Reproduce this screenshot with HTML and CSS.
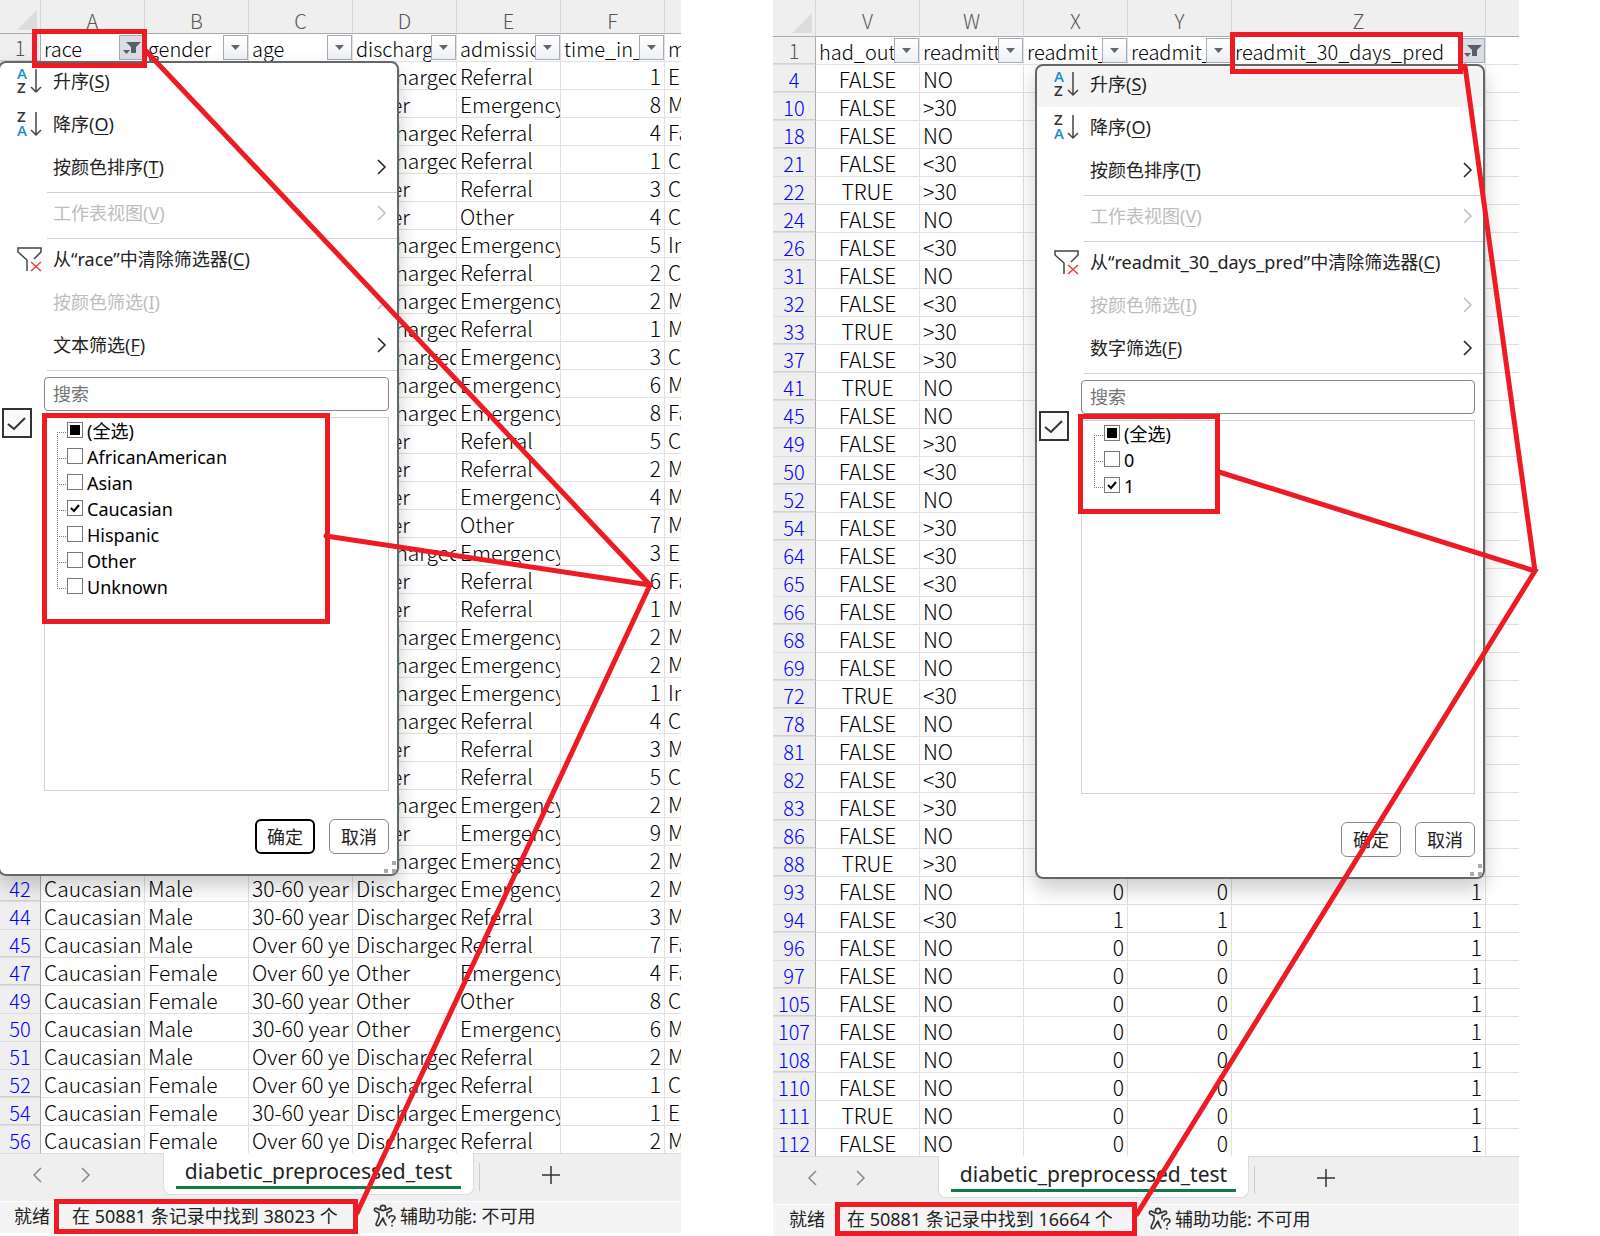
FILE: index.html
```html
<!DOCTYPE html>
<html lang="zh-CN">
<head>
<meta charset="utf-8">
<title>diabetic_preprocessed_test</title>
<link rel="stylesheet" href="styles.css">
</head>
<body>
<svg class="symbols" aria-hidden="true">
  <symbol id="sort-asc" viewBox="0 0 26 26">
    <text class="glyph-blue" x="0" y="11">A</text><text class="glyph-dark" x="0" y="25">Z</text>
    <path class="stroke" d="M19 1V24M14 19L19 24L24 19"/>
  </symbol>
  <symbol id="sort-desc" viewBox="0 0 26 26">
    <text class="glyph-dark" x="0" y="11">Z</text><text class="glyph-blue" x="0" y="25">A</text>
    <path class="stroke" d="M19 1V24M14 19L19 24L24 19"/>
  </symbol>
  <symbol id="clear" viewBox="0 0 26 26">
    <path class="stroke" d="M10 25V14L1 6V2H24V6L17 13"/>
    <path class="cross" d="M14 16L24 25M24 16L14 25"/>
  </symbol>
  <symbol id="chevron" viewBox="0 0 10 16"><path d="M1 1L8 8L1 15" fill="none" stroke="currentColor" stroke-width="1.500"/></symbol>
  <symbol id="drop" viewBox="0 0 23 23"><path d="M7 9H16L11.500 14Z" fill="#666"/></symbol>
  <symbol id="filtered" viewBox="0 0 23 23"><path d="M6 6H21L16 11V17H11V11Z" fill="#5b5e66"/><path d="M3 14H10L6.500 18Z" fill="#5b5e66"/></symbol>
  <symbol id="person" viewBox="0 0 24 24">
    <g fill="none" stroke="#333" stroke-width="1.600" stroke-linejoin="round" stroke-linecap="round">
      <circle cx="10" cy="4" r="2.600"/>
      <path d="M7 6L3 4C1 4 1 6 2 7L6 9V13L3 20C3 22 5 22 6 21L10 14L11 16M13 6L17 4C19 4 19 6 18 7L14 9V12M10 16L13 21"/>
      <path d="M16 14C16 11 22 11 22 14C22 16 19 16 19 18.500M19 21.500V22"/>
    </g>
  </symbol>
</svg>

<main class="stage">
  <section class="sheet sheet-left">
    <table class="grid">
      <colgroup><col class="c-num"><col class="c"><col class="c"><col class="c"><col class="c"><col class="c"><col class="c"><col></colgroup>
      <thead>
        <tr class="letters"><th class="corner"><svg width="20" height="20"><path d="M20 0V20H0Z" fill="#dcdcdc"/></svg></th><th>A</th><th>B</th><th>C</th><th>D</th><th>E</th><th>F</th><th></th></tr>
        <tr class="names"><th class="num first gap">1</th>
          <td><div><span>race</span><button class="on" aria-label="race"><svg><use href="#filtered"/></svg></button></div></td>
          <td><div><span>gender</span><button aria-label="gender"><svg><use href="#drop"/></svg></button></div></td>
          <td><div><span>age</span><button aria-label="age"><svg><use href="#drop"/></svg></button></div></td>
          <td><div><span>discharge</span><button aria-label="discharge"><svg><use href="#drop"/></svg></button></div></td>
          <td><div><span>admission</span><button aria-label="admission"><svg><use href="#drop"/></svg></button></div></td>
          <td><div><span>time_in_</span><button aria-label="time_in_"><svg><use href="#drop"/></svg></button></div></td>
          <td><div><span>m</span></div></td></tr>
      </thead>
      <tbody id="left-rows"></tbody>
    </table>
    <nav class="tabs">
      <button class="step back" aria-label="上一个"><svg width="10" height="16"><use href="#chevron"/></svg></button>
      <button class="step" aria-label="下一个"><svg width="10" height="16"><use href="#chevron"/></svg></button>
      <button class="tab"><span>diabetic_preprocessed_test</span></button>
      <i class="bar"></i>
      <button class="plus" aria-label="新工作表"><svg width="18" height="18"><path d="M9 0V18M0 9H18" stroke="#333" stroke-width="1.500"/></svg></button>
    </nav>
    <footer class="status"><span class="ready">就绪</span><span class="found">在 50881 条记录中找到 38023 个</span><svg width="24" height="24"><use href="#person"/></svg><span>辅助功能: 不可用</span></footer>

    <form class="menu">
      <ul class="items">
        <li><button type="button"><svg class="icon"><use href="#sort-asc"/></svg><span>升序(<u>S</u>)</span></button></li>
        <li><button type="button"><svg class="icon"><use href="#sort-desc"/></svg><span>降序(<u>O</u>)</span></button></li>
        <li class="rule"><button type="button"><i class="icon"></i><span>按颜色排序(<u>T</u>)</span><svg class="more"><use href="#chevron"/></svg></button></li>
        <li class="rule"><button type="button" disabled><i class="icon"></i><span>工作表视图(<u>V</u>)</span><svg class="more"><use href="#chevron"/></svg></button></li>
        <li><button type="button"><svg class="icon"><use href="#clear"/></svg><span>从“race”中清除筛选器(<u>C</u>)</span></button></li>
        <li><button type="button" disabled><i class="icon"></i><span>按颜色筛选(<u>I</u>)</span><svg class="more"><use href="#chevron"/></svg></button></li>
        <li class="rule"><button type="button"><i class="icon"></i><span>文本筛选(<u>F</u>)</span><svg class="more"><use href="#chevron"/></svg></button></li>
      </ul>
      <div class="pick">
        <div class="gutter"><svg width="30" height="30"><rect x="1" y="1" width="28" height="28" fill="#fafafa" stroke="#333" stroke-width="2"/><path d="M6 16L12 21L23 10" fill="none" stroke="#333" stroke-width="2"/></svg></div>
        <div class="fields">
          <input class="search" type="text" placeholder="搜索" aria-label="搜索">
          <ul class="values">
            <li><label><input type="checkbox" class="some">(全选)</label></li>
            <li><label><input type="checkbox">AfricanAmerican</label></li>
            <li><label><input type="checkbox">Asian</label></li>
            <li><label><input type="checkbox" checked>Caucasian</label></li>
            <li><label><input type="checkbox">Hispanic</label></li>
            <li><label><input type="checkbox">Other</label></li>
            <li><label><input type="checkbox">Unknown</label></li>
          </ul>
        </div>
      </div>
      <div class="actions"><button type="button" class="default">确定</button><button type="button">取消</button></div>
      <svg class="grip" width="12" height="12"><path d="M8 0h4v4h-4zM8 8h4v4h-4zM0 8h4v4h-4z" fill="#aaa"/></svg>
    </form>
  </section>

  <section class="sheet sheet-right">
    <table class="grid">
      <colgroup><col class="c-num"><col class="c"><col class="c"><col class="c"><col class="c"><col class="c-wide"><col></colgroup>
      <thead>
        <tr class="letters"><th class="corner"><svg width="20" height="20"><path d="M20 0V20H0Z" fill="#dcdcdc"/></svg></th><th>V</th><th>W</th><th>X</th><th>Y</th><th>Z</th><th></th></tr>
        <tr class="names"><th class="num first gap">1</th>
          <td><div><span>had_outp</span><button aria-label="had_outp"><svg><use href="#drop"/></svg></button></div></td>
          <td><div><span>readmitt</span><button aria-label="readmitt"><svg><use href="#drop"/></svg></button></div></td>
          <td><div><span>readmit_</span><button aria-label="readmit_"><svg><use href="#drop"/></svg></button></div></td>
          <td><div><span>readmit_</span><button aria-label="readmit_"><svg><use href="#drop"/></svg></button></div></td>
          <td><div><span>readmit_30_days_pred</span><button class="on" aria-label="readmit_30_days_pred"><svg><use href="#filtered"/></svg></button></div></td>
          <td></td></tr>
      </thead>
      <tbody id="right-rows"></tbody>
    </table>
    <nav class="tabs">
      <button class="step back" aria-label="上一个"><svg width="10" height="16"><use href="#chevron"/></svg></button>
      <button class="step" aria-label="下一个"><svg width="10" height="16"><use href="#chevron"/></svg></button>
      <button class="tab"><span>diabetic_preprocessed_test</span></button>
      <i class="bar"></i>
      <button class="plus" aria-label="新工作表"><svg width="18" height="18"><path d="M9 0V18M0 9H18" stroke="#333" stroke-width="1.500"/></svg></button>
    </nav>
    <footer class="status"><span class="ready">就绪</span><span class="found">在 50881 条记录中找到 16664 个</span><svg width="24" height="24"><use href="#person"/></svg><span>辅助功能: 不可用</span></footer>

    <form class="menu">
      <ul class="items">
        <li class="hover"><button type="button"><svg class="icon"><use href="#sort-asc"/></svg><span>升序(<u>S</u>)</span></button></li>
        <li><button type="button"><svg class="icon"><use href="#sort-desc"/></svg><span>降序(<u>O</u>)</span></button></li>
        <li class="rule"><button type="button"><i class="icon"></i><span>按颜色排序(<u>T</u>)</span><svg class="more"><use href="#chevron"/></svg></button></li>
        <li class="rule"><button type="button" disabled><i class="icon"></i><span>工作表视图(<u>V</u>)</span><svg class="more"><use href="#chevron"/></svg></button></li>
        <li><button type="button"><svg class="icon"><use href="#clear"/></svg><span>从“readmit_30_days_pred”中清除筛选器(<u>C</u>)</span></button></li>
        <li><button type="button" disabled><i class="icon"></i><span>按颜色筛选(<u>I</u>)</span><svg class="more"><use href="#chevron"/></svg></button></li>
        <li class="rule"><button type="button"><i class="icon"></i><span>数字筛选(<u>F</u>)</span><svg class="more"><use href="#chevron"/></svg></button></li>
      </ul>
      <div class="pick">
        <div class="gutter"><svg width="30" height="30"><rect x="1" y="1" width="28" height="28" fill="#fafafa" stroke="#333" stroke-width="2"/><path d="M6 16L12 21L23 10" fill="none" stroke="#333" stroke-width="2"/></svg></div>
        <div class="fields">
          <input class="search" type="text" placeholder="搜索" aria-label="搜索">
          <ul class="values">
            <li><label><input type="checkbox" class="some">(全选)</label></li>
            <li><label><input type="checkbox">0</label></li>
            <li><label><input type="checkbox" checked>1</label></li>
          </ul>
        </div>
      </div>
      <div class="actions"><button type="button">确定</button><button type="button">取消</button></div>
      <svg class="grip" width="12" height="12"><path d="M8 0h4v4h-4zM8 8h4v4h-4zM0 8h4v4h-4z" fill="#aaa"/></svg>
    </form>
  </section>

  <svg class="marks" viewBox="0 0 1600 1236" preserveAspectRatio="none" aria-hidden="true">
    <rect x="34.500" y="31.500" width="110" height="34"/>
    <rect x="44.500" y="415.500" width="283" height="206"/>
    <rect x="56.500" y="1201.500" width="299" height="30"/>
    <path d="M146 51L650 585M326 536L650 585L357 1213"/>
    <rect x="1232.500" y="34.500" width="228" height="37"/>
    <rect x="1080.500" y="416.500" width="137" height="95"/>
    <rect x="837.500" y="1204.500" width="297" height="29"/>
    <path d="M1465 66L1535 571M1219 472L1535 571L1137 1214"/>
  </svg>
</main>
<script src="rows.js"></script>
</body>
</html>
```
FILE: styles.css
```css
* { box-sizing: border-box; }
body {
  margin: 0;
  background: #fff;
  color: #222;
  font: 18px/26px "Noto Sans", "Noto Sans CJK SC", sans-serif;
}
button {
  margin: 0;
  padding: 0;
  border: 0;
  background: none;
  color: inherit;
  font: inherit;
}
ul { margin: 0; padding: 0; list-style: none; }
u { text-underline-offset: 3px; text-decoration-thickness: 1px; }
.symbols { position: absolute; width: 0; height: 0; }

.stage {
  position: relative;
  display: grid;
  grid-template-columns: 681fr 746fr;
  column-gap: 92px;
  padding-right: 81px;
  align-items: start;
  overflow: hidden;
}
.sheet { position: relative; min-width: 0; }
.sheet-left { --num: 41px; --head: 34px; --lead: 0px; --menu-x: -2px; --menu-y: 61px; --menu-w: 401px; }
.sheet-right { --num: 43px; --head: 37px; --lead: 2px; --menu-x: 262px; --menu-y: 64px; --menu-w: 450px; }

/* cells */
.grid {
  width: 100%;
  table-layout: fixed;
  border-collapse: separate;
  border-spacing: 0;
  color: #000;
  font: 300 21px/29px "Noto Sans CJK SC", sans-serif;
}
.c-num { width: var(--num); }
.c { width: 104px; }
.c-wide { width: 254px; }
.grid th, .grid td {
  height: 28px;
  padding: 0;
  border-right: 1px solid #e0e0e0;
  border-bottom: 1px solid #e0e0e0;
  white-space: nowrap;
  text-align: left;
  font-weight: 300;
}
.grid th:last-child, .grid td:last-child { border-right: 0; }
.grid tbody tr:last-child > * { border-bottom: 0; }
/* clips sideways only, so descenders keep their full depth */
.cell { height: 27px; padding: 0 3px; overflow-x: clip; }
.grid .letters th {
  height: var(--head);
  padding: 10px 0 0;
  font-size: 20px;
  line-height: 22px;
  text-align: center;
  vertical-align: top;
  color: #555;
  background: #efefef;
  border-bottom-color: #ababab;
  border-right-color: #d6d6d6;
}
.grid .letters .corner { padding: 0 3px 3px 0; text-align: right; vertical-align: bottom; }
.corner svg { display: block; margin-left: auto; }
.grid .num {
  font-size: 20px;
  text-align: center;
  color: #00f;
  background: #efefef;
  border-right-color: #ababab;
  border-bottom-color: #dcdcdc;
}
.num .cell { padding: 0; }
.grid .first { color: #555; line-height: 27px; }
.grid .gap { background: linear-gradient(#d0d0d0, #d0d0d0) 0 100% / 100% 1px no-repeat padding-box #efefef; }
.grid .right { text-align: right; }
.grid .center { text-align: center; }
.names div { display: flex; height: 27px; padding-top: 1px; font-size: 20px; line-height: 27px; }
.grid .names td { padding-left: 3px; }
.names span { flex: 1; min-width: 0; overflow-x: clip; }
.names button {
  flex: none;
  width: 25px;
  height: 25px;
  border: 1px solid #a6acb8;
  background: linear-gradient(#fff, #eef0f4);
}
.names .on { background: #d9dde5; }
.names svg { display: block; width: 23px; height: 23px; }

/* sheet tabs and status bar */
.tabs {
  display: flex;
  align-items: flex-start;
  height: 48px;
  padding-left: calc(32px + var(--lead));
  border-top: 1px solid #dcdcdc;
  background: #efefef;
}
.step { width: 10px; margin: 13px 39px 0 0; color: #888; }
.step + .tab { margin-left: 33px; }
.step svg { display: block; }
.back svg { transform: scaleX(-1); }
.tab {
  width: 311px;
  height: 42px;
  margin-top: -1px;
  padding: 0 12px;
  border: 1px solid #dcdcdc;
  border-top: 0;
  border-radius: 0 0 8px 8px;
  background: #fff;
  font-size: 21px;
}
.tab span { display: block; height: 36px; margin-bottom: 5px; border-bottom: 3px solid #107c41; line-height: 36px; }
.bar { width: 1px; height: 28px; margin: 9px 62px 0 5px; background: #ccc; }
.plus { margin-top: 12px; }
.plus svg { display: block; }
.status {
  display: flex;
  align-items: center;
  height: 32px;
  padding: 0 0 4px calc(14px + var(--lead));
  border-top: 1px solid #fff;
  background: #f4f4f4;
  white-space: nowrap;
}
.ready { width: 58px; }
.found { width: 301px; }
.status svg { margin-right: 3px; }

/* filter menu */
.menu {
  position: absolute;
  left: var(--menu-x);
  top: var(--menu-y);
  width: var(--menu-w);
  padding-bottom: 22px;
  border-radius: 8px;
  outline: 2px solid #666;
  outline-offset: -2px;
  background: #fff;
  box-shadow: 0 10px 20px rgba(0, 0, 0, .2);
}
.items button {
  display: flex;
  align-items: center;
  width: 100%;
  height: 43px;
  padding: 0 12px 3px 19px;
  text-align: left;
}
.items span { flex: 1; white-space: nowrap; }
.items button:disabled { color: #bdbdbd; }
.icon { flex: none; width: 26px; height: 26px; margin-right: 10px; }
.more { width: 10px; height: 16px; }
.hover { border-radius: 8px 8px 0 0; background: #f4f4f4; }
.rule { padding-bottom: 3px; background: linear-gradient(#d0d0d0, #d0d0d0) 49px 100% / 100% 1px no-repeat; }
.glyph-blue, .glyph-dark { font: 600 15px "Open Sans", sans-serif; }
.glyph-blue { fill: #1e8bd0; }
.glyph-dark { fill: #333; }
.stroke { fill: none; stroke: #444; stroke-width: 1.5; }
.cross { fill: none; stroke: #e84040; stroke-width: 1.5; }
.pick { display: flex; padding: 6px 10px 0 0; }
.gutter { flex: none; width: 46px; padding: 31px 0 0 4px; }
.fields { flex: 1; min-width: 0; }
.search {
  display: block;
  width: 100%;
  height: 34px;
  padding: 0 8px;
  border: 1px solid #868686;
  border-radius: 4px;
  background: #fff;
  font: inherit;
}
.search::placeholder { color: #757575; opacity: 1; }
.values {
  min-height: 374px;
  margin-top: 6px;
  padding-left: 12px;
  border: 1px solid #d0d0d0;
  color: #000;
}
.values li { display: flex; height: 26px; }
.values li::before {
  content: "";
  width: 9px;
  background:
    repeating-linear-gradient(#777 0 1px, transparent 1px 2px) 0 0 / 1px 100% no-repeat,
    repeating-linear-gradient(90deg, #777 0 1px, transparent 1px 2px) 0 14px / 100% 1px no-repeat;
}
.values li:first-child::before { background-position: 0 14px, 0 14px; }
.values li:last-child::before { background-size: 1px 14px, 100% 1px; }
.values label { display: flex; }
.values input {
  appearance: none;
  width: 16px;
  height: 16px;
  margin: 4px 4px 0 1px;
  border: 1px solid #777;
  background: #fff;
}
.values input:checked {
  background: url("data:image/svg+xml,%3Csvg xmlns='http://www.w3.org/2000/svg' viewBox='0 0 14 14'%3E%3Cpath d='M3 7l3 3 5-6' fill='none' stroke='black' stroke-width='2'/%3E%3C/svg%3E") no-repeat;
}
.values .some { background: linear-gradient(#000, #000) center / 10px 10px no-repeat; }
.actions { display: flex; justify-content: flex-end; gap: 14px; padding: 28px 10px 0 0; }
.actions button {
  width: 60px;
  height: 35px;
  border: 1px solid #888;
  border-radius: 6px;
  background: #fff;
}
.actions .default { border: 2px solid #000; }
.grip { position: absolute; right: 3px; bottom: 3px; }

/* callouts */
.marks { position: absolute; inset: 0; width: 100%; height: 1236px; pointer-events: none; }
.marks rect, .marks path { fill: none; stroke: #ed1c24; stroke-width: 5; stroke-linecap: round; vector-effect: non-scaling-stroke; }
```
FILE: rows.js
```js
const D = 'Discharged', O = 'Other', R = 'Referral', E = 'Emergency';
const covered = [
  [D, R, 1, 'Em'], [O, E, 8, 'M'], [D, R, 4, 'Fa'], [D, R, 1, 'C'], [O, R, 3, 'C'], [O, O, 4, 'C'],
  [D, E, 5, 'In'], [D, R, 2, 'C'], [D, E, 2, 'M'], [D, R, 1, 'M'], [D, E, 3, 'C'], [D, E, 6, 'M'],
  [D, E, 8, 'Fa'], [O, R, 5, 'C'], [O, R, 2, 'M'], [O, E, 4, 'M'], [O, O, 7, 'M'], [D, E, 3, 'Em'],
  [O, R, 6, 'Fa'], [O, R, 1, 'M'], [D, E, 2, 'M'], [D, E, 2, 'M'], [D, E, 1, 'In'], [D, R, 4, 'C'],
  [O, R, 3, 'M'], [O, R, 5, 'C'], [D, E, 2, 'M'], [O, E, 9, 'M'], [D, E, 2, 'M']
].map(r => ['', '', '', '', ...r]);
const mid = '30-60 year', old = 'Over 60 ye', C = 'Caucasian';
const open = [
  [42, C, 'Male', mid, D, E, 2, 'M'], [44, C, 'Male', mid, D, R, 3, 'M'], [45, C, 'Male', old, D, R, 7, 'Fa'],
  [47, C, 'Female', old, O, E, 4, 'Fa'], [49, C, 'Female', mid, O, O, 8, 'C'], [50, C, 'Male', mid, O, E, 6, 'M'],
  [51, C, 'Male', old, D, R, 2, 'M'], [52, C, 'Female', old, D, R, 1, 'C'], [54, C, 'Female', mid, D, E, 1, 'Em'],
  [56, C, 'Female', old, D, R, 2, 'M']
];

const nums = [4, 10, 18, 21, 22, 24, 26, 31, 32, 33, 37, 41, 45, 49, 50, 52, 54, 64, 65, 66, 68, 69, 72, 78,
  81, 82, 83, 86, 88, 93, 94, 96, 97, 105, 107, 108, 110, 111, 112];
const yes = [22, 33, 41, 72, 88, 111];
const over = [10, 22, 33, 37, 49, 54, 83, 88];
const under = [21, 26, 32, 50, 64, 65, 72, 82, 94];
const right = nums.map(n => {
  const f = n < 93 ? '' : n === 94 ? 1 : 0;
  return [n, yes.includes(n) ? 'TRUE' : 'FALSE', over.includes(n) ? '>30' : under.includes(n) ? '<30' : 'NO',
    f, f, n < 93 ? '' : 1, ''];
});

function fill(id, rows) {
  const body = document.getElementById(id);
  rows.forEach((row, i) => {
    const tr = body.insertRow();
    row.forEach((v, j) => {
      const cell = document.createElement(j ? 'td' : 'th');
      if (!j) cell.className = rows[i + 1] && rows[i + 1][0] - v > 1 ? 'num gap' : 'num';
      else if (typeof v === 'number') cell.className = 'right';
      else if (v === 'TRUE' || v === 'FALSE') cell.className = 'center';
      const box = document.createElement('div');
      box.className = 'cell';
      box.textContent = v;
      cell.append(box);
      tr.append(cell);
    });
  });
  for (const cell of body.lastElementChild.cells) cell.style.height = '27px';
}
fill('left-rows', covered.concat(open));
fill('right-rows', right);
document.querySelectorAll('.some').forEach(box => { box.indeterminate = true; });
```
